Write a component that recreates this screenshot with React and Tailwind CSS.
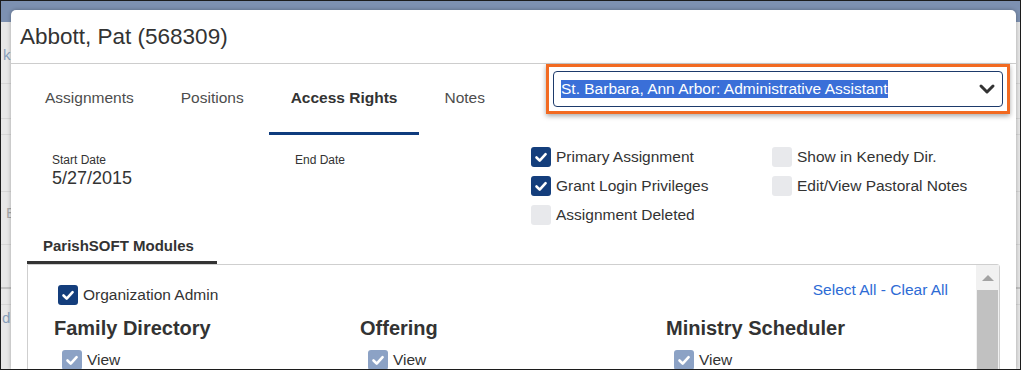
import React from "react";

const Check = ({ checked = false, muted = false }) => {
  const bg = !checked ? "bg-[#e8e9ec]" : muted ? "bg-[#8ca2c5]" : "bg-[#143e7c]";
  return (
    <span className={`w-[20px] h-[20px] rounded-[3px] shrink-0 flex items-center justify-center ${bg}`}>
      {checked && (
        <svg width="20" height="20" viewBox="0 0 20 20">
          <path d="M5.5 10.5 L8.7 13.6 L14.6 7.2" fill="none" stroke="#fff" strokeWidth="2.6" strokeLinecap="round" strokeLinejoin="round" />
        </svg>
      )}
    </span>
  );
};

const CheckRow = ({ label, checked, muted, className = "" }) => (
  <div className={`flex items-center gap-[5px] ${className}`}>
    <Check checked={checked} muted={muted} />
    <span className="text-[15.5px] leading-[18px] text-[#333]">{label}</span>
  </div>
);

const tabs = ["Assignments", "Positions", "Access Rights", "Notes"];

const modules = ["Family Directory", "Offering", "Ministry Scheduler"];

export default function App() {
  return (
    <div className="relative w-[1021px] h-[370px] overflow-hidden border border-[#1c1c1c] bg-[#e7e7e7] font-['Liberation_Sans',Arial,sans-serif]">
      {/* page behind the dialog */}
      <div className="h-[21px] bg-[#7d91b1]" />
      <div className="flex flex-col text-[15px] text-[#8aa0bb]">
        <div className="h-[62px] border-b border-[#d6d6d6] pl-[2px] pt-[22px]">k</div>
        <div className="h-[35px] border-b border-[#d6d6d6]" />
        <div className="h-[16px] border-b border-[#d6d6d6]" />
        <div className="h-[57px] border-b border-[#d6d6d6]" />
        <div className="h-[53px] border-b border-[#d6d6d6] pl-[5px] pt-[10px] text-[#a9a9a9]">E</div>
        <div className="h-[44px] border-b-2 border-[#c4c4c4]" />
        <div className="h-[16px] border-b border-[#d6d6d6]" />
        <div className="pl-[1px] pt-[2px]">d</div>
      </div>

      {/* dialog */}
      <div className="absolute left-[10px] top-[9px] w-[1005px] bottom-0 bg-white rounded-t-[5px] shadow-[0_0_4px_rgba(0,0,0,0.3)]">
        <div className="h-[54px] border-b border-[#cdcdcd] pl-[9px] flex items-center text-[22.5px] text-[#333]">
          Abbott, Pat (568309)
        </div>

        <div className="flex items-start pl-[12px]">
          <div className="flex gap-[3px]">
            {tabs.map((t) => (
              <div
                key={t}
                className={`h-[71px] px-[22px] flex items-center border-b-[3px] text-[15.5px] ${
                  t === "Access Rights" ? "border-[#0f3c7e] font-bold text-[#333]" : "border-transparent text-[#4d4d4d]"
                }`}
              >
                {t}
              </div>
            ))}
          </div>

          <div className="ml-auto mr-[6px] border-[3px] border-[#f26a21] p-[4px] shadow-[0_2px_5px_rgba(0,0,0,0.35)]">
            <div className="w-[450px] h-[36px] border border-[#1d3a6b] rounded-[4px] flex items-center pl-[7px] pr-[6px]">
              <span className="bg-[#3a6fd8] text-white text-[15.5px] leading-[18px]">
                St. Barbara, Ann Arbor: Administrative Assistant
              </span>
              <svg className="ml-auto" width="18" height="18" viewBox="0 0 18 18">
                <path d="M3 6 L9 12 L15 6" fill="none" stroke="#333" strokeWidth="3" strokeLinecap="round" strokeLinejoin="round" />
              </svg>
            </div>
          </div>
        </div>

        <div className="h-[97px] pl-[41px] grid grid-cols-[243px_236px_241px_1fr] text-[#333]">
          <div className="pt-[18px]">
            <div className="text-[12px] leading-[14px]">Start Date</div>
            <div className="text-[18px] leading-[22px]">5/27/2015</div>
          </div>
          <div className="pt-[18px]">
            <div className="text-[12px] leading-[14px]">End Date</div>
          </div>
          <div className="pt-[8px] flex flex-col">
            <CheckRow label="Primary Assignment" checked className="h-[28.7px]" />
            <CheckRow label="Grant Login Privileges" checked className="h-[28.7px]" />
            <CheckRow label="Assignment Deleted" className="h-[28.7px]" />
          </div>
          <div className="pt-[8px] flex flex-col">
            <CheckRow label="Show in Kenedy Dir." className="h-[28.7px]" />
            <CheckRow label="Edit/View Pastoral Notes" className="h-[28.7px]" />
          </div>
        </div>

        <div className="mx-[16px] flex">
          <div className="w-[190px] h-[32px] pl-[16px] flex items-center border-b-[3px] border-[#333] text-[15px] font-bold text-[#333]">
            ParishSOFT Modules
          </div>
        </div>

        <div className="mx-[16px] h-[200px] border border-[#cfcfcf] rounded-tr-[3px] flex">
          <div className="flex-1 text-[#333]">
            <div className="flex items-start justify-between pt-[16px] pl-[30px] pr-[28px]">
              <CheckRow label="Organization Admin" checked className="mt-[4px] h-[20px]" />
              <div className="text-[15.5px] leading-[18px] text-[#2d6bd5]">Select All - Clear All</div>
            </div>
            <div className="pl-[26px] mt-[11px] grid grid-cols-[306px_306px_1fr]">
              {modules.map((m) => (
                <div key={m}>
                  <div className="text-[20px] leading-[24px] font-bold">{m}</div>
                  <CheckRow label="View" checked muted className="mt-[10px] ml-[8px] h-[20px]" />
                </div>
              ))}
            </div>
          </div>
          <div className="w-[23px] bg-[#f1f1f1] flex flex-col">
            <div className="h-[25px] flex items-center justify-center">
              <svg width="12" height="8" viewBox="0 0 12 8">
                <path d="M0 7 L6 1 L12 7 Z" fill="#a3a3a3" />
              </svg>
            </div>
            <div className="flex-1 mx-[1px] bg-[#c1c1c1]" />
          </div>
        </div>
      </div>
    </div>
  );
}
